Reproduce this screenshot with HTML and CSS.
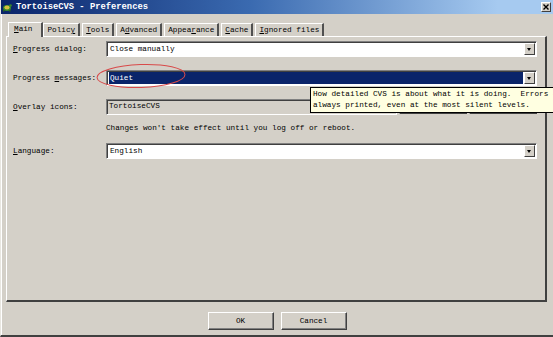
FILE: index.html
```html
<!DOCTYPE html>
<html lang="en">
<head>
    <meta charset="UTF-8">
    <title>TortoiseCVS - Preferences</title>
<link rel="stylesheet" href="styles.css">
</head>
<body>
<div class="window">
    <div class="titlebar">
        <svg class="appicon" width="10" height="10" viewBox="0 0 10 10">
            <ellipse cx="5" cy="6" rx="4" ry="3" fill="#3a8a2a"/>
            <ellipse cx="5" cy="5.5" rx="2.6" ry="2" fill="#d8c040"/>
            <circle cx="8.5" cy="3.5" r="1.3" fill="#3a8a2a"/>
            <rect x="1" y="8" width="1.5" height="1.5" fill="#2a6a1a"/>
            <rect x="7" y="8" width="1.5" height="1.5" fill="#2a6a1a"/>
        </svg>
        <span class="caption">TortoiseCVS - Preferences</span>
        <div class="closebtn">
            <svg width="6" height="6" viewBox="0 0 6 6">
                <path d="M0.5 0.5 L5.5 5.5 M5.5 0.5 L0.5 5.5" stroke="#000" stroke-width="1.4"/>
            </svg>
        </div>
    </div>

    <nav class="tabs">
        <div class="tab valgt"><u>M</u>ain</div>
        <div class="tab">Polic<u>y</u></div>
        <div class="tab"><u>T</u>ools</div>
        <div class="tab">A<u>d</u>vanced</div>
        <div class="tab">Appea<u>r</u>ance</div>
        <div class="tab"><u>C</u>ache</div>
        <div class="tab"><u>I</u>gnored files</div>
    </nav>

    <section class="panel">
        <div class="row">
            <label><u>P</u>rogress dialog:</label>
            <div class="combo">
                <span class="value">Close manually</span>
                <div class="arrow"></div>
            </div>
        </div>

        <div class="row">
            <label>Progress <u>m</u>essages:</label>
            <div class="combo focus">
                <span class="value">Quiet</span>
                <div class="arrow"></div>
            </div>
        </div>

        <div class="row">
            <label><u>O</u>verlay icons:</label>
            <div class="overlay">
                <div class="textbox">TortoiseCVS</div>
                <div class="knap"></div>
                <div class="knap"></div>
            </div>
        </div>

        <p class="note">Changes won't take effect until you log off or reboot.</p>

        <div class="row">
            <label><u>L</u>anguage:</label>
            <div class="combo">
                <span class="value">English</span>
                <div class="arrow"></div>
            </div>
        </div>
    </section>

    <footer class="bund">
        <div class="knap stor">OK</div>
        <div class="knap stor">Cancel</div>
    </footer>

    <svg class="ring" width="96" height="30" viewBox="0 0 96 30">
        <ellipse cx="47" cy="14" rx="44" ry="11.5" fill="none" stroke="#d84a4a" stroke-width="1" transform="rotate(-2 47 14)"/>
    </svg>

    <div class="tooltip">How detailed CVS is about what it is doing.  Errors are
always printed, even at the most silent levels.</div>
</div>
</body>
</html>
```

FILE: styles.css
```css
body {
    margin: 0;
    width: 553px;
    height: 337px;
    overflow: hidden;
    font-family: "Liberation Mono", "DejaVu Sans Mono", monospace;
    font-size: 7.7px;
    color: #000;
}

.window {
    position: relative;
    box-sizing: border-box;
    height: 337px;
    background-color: #d4d0c8;
    border-left: 1px solid #e8e6e0;
    border-bottom: 2px solid #404040;
    box-shadow: inset 1px 0 #ffffff;
}

/* title bar */

.titlebar {
    display: flex;
    align-items: center;
    height: 14px;
    padding-left: 1px;
    background: linear-gradient(to right, #0a246a 0%, #3a6ab0 45%, #a6caf0 90%);
}

.appicon {
    flex: none;
}

.caption {
    margin-left: 4px;
    color: #fff;
    font-weight: bold;
    font-size: 8.8px;
    flex: 1;
}

.closebtn {
    display: flex;
    align-items: center;
    justify-content: center;
    width: 10px;
    height: 10px;
    margin-right: 2px;
    background-color: #d4d0c8;
    border: 1px solid;
    border-color: #fff #404040 #404040 #fff;
    box-sizing: border-box;
}

/* tabs */

.tabs {
    display: flex;
    height: 14px;
    margin-top: 8px;
    padding-left: 7px;
    align-items: flex-end;
}

.tab {
    box-sizing: border-box;
    height: 13px;
    line-height: 12px;
    padding: 0 3px 0 3px;
    margin-right: 2px;
    border-top: 1px solid #fff;
    border-left: 1px solid #fff;
    border-right: 2px solid #505050;
    white-space: nowrap;
}

.tab.valgt {
    height: 15px;
    padding: 0 9px 0 5px;
    margin-right: 0;
    position: relative;
    top: 1px;
    background-color: #d4d0c8;
    z-index: 1;
}

/* panel */

.panel {
    box-sizing: border-box;
    height: 266px;
    margin: 0 6px 0 5px;
    padding: 4px 8px 0 6px;
    border-top: 1px solid #fff;
    border-left: 1px solid #fff;
    border-right: 2px solid #404040;
    border-bottom: 2px solid #404040;
}

.row {
    display: grid;
    grid-template-columns: 93px 1fr;
    align-items: center;
    height: 16px;
    margin-bottom: 13px;
}

.row label {
    white-space: nowrap;
}

.combo {
    display: flex;
    align-items: center;
    box-sizing: border-box;
    height: 16px;
    background-color: #fff;
    border: 1px solid;
    border-color: #808080 #fff #fff #808080;
    box-shadow: inset 1px 1px #404040;
    padding: 1px 1px 1px 2px;
}

.combo .value {
    flex: 1;
    line-height: 12px;
    padding-left: 1px;
}

.combo.focus .value {
    background-color: #0a246a;
    color: #fff;
    align-self: stretch;
    margin-right: 1px;
}

.arrow {
    box-sizing: border-box;
    width: 11px;
    height: 12px;
    background-color: #d4d0c8;
    border: 1px solid;
    border-color: #fff #404040 #404040 #fff;
    position: relative;
}

.arrow::after {
    content: "";
    position: absolute;
    left: 2px;
    top: 4px;
    border-left: 2.5px solid transparent;
    border-right: 2.5px solid transparent;
    border-top: 3px solid #000;
}

.overlay {
    display: flex;
    gap: 2px;
    height: 16px;
}

.textbox {
    box-sizing: border-box;
    width: 291px;
    height: 16px;
    line-height: 13px;
    padding-left: 2px;
    border: 1px solid;
    border-color: #808080 #fff #fff #808080;
    box-shadow: inset 1px 1px #404040;
}

.knap {
    box-sizing: border-box;
    width: 68px;
    height: 15px;
    border: 1px solid;
    border-color: #fff #404040 #404040 #fff;
    box-shadow: inset -1px -1px #808080;
}

.note {
    margin: -5px 0 10px 93px;
    line-height: 10px;
}

/* buttons */

.bund {
    display: flex;
    justify-content: center;
    gap: 7px;
    padding-top: 10px;
}

.knap.stor {
    width: 66px;
    height: 18px;
    display: flex;
    align-items: center;
    justify-content: center;
}

/* annotation + tooltip */

.ring {
    position: absolute;
    left: 93px;
    top: 62px;
}

.tooltip {
    position: absolute;
    left: 309px;
    top: 87px;
    width: 260px;
    height: 26px;
    box-sizing: border-box;
    padding: 1px 2px;
    background-color: #ffffe1;
    border: 1px solid #000;
    white-space: pre;
    line-height: 11px;
    overflow: hidden;
}
```
